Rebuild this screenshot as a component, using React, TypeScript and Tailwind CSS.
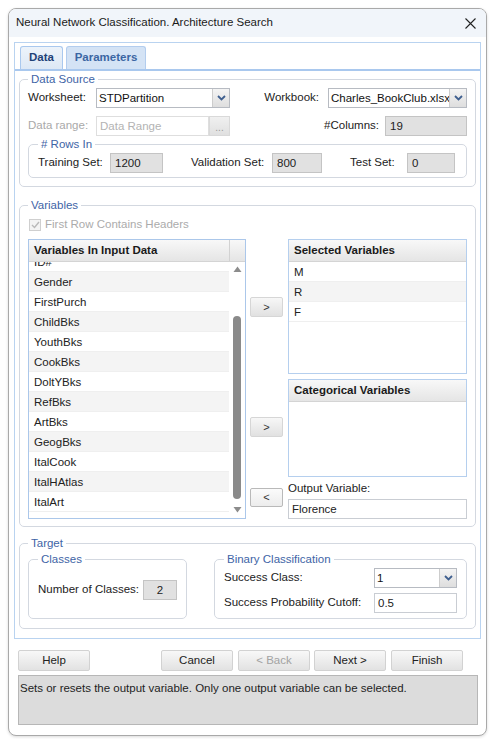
import React from "react";

const Chevron = () => (
  <svg width="9" height="6" viewBox="0 0 9 6">
    <path d="M1 1 L4.5 4.5 L8 1" fill="none" stroke="#3f5f8f" strokeWidth="1.8" />
  </svg>
);

function Select({ value, w }: { value: string; w: string }) {
  return (
    <div className={`flex h-[20px] border border-[#b7bbc2] bg-white ${w}`}>
      <div className="flex-1 pl-[2px] leading-[18px] text-[#111] whitespace-nowrap overflow-hidden">{value}</div>
      <div className="w-[17px] flex items-center justify-center border-l border-[#cdcdcd] bg-gradient-to-b from-[#f4f4f4] to-[#dedede]">
        <Chevron />
      </div>
    </div>
  );
}

function GrayBox({ value, w, center }: { value: string; w: string; center?: boolean }) {
  return (
    <div
      className={`h-[20px] border border-[#c4c4c4] bg-[#e1e1e1] leading-[18px] text-[#222] ${
        center ? "text-center" : "pl-[4px]"
      } ${w}`}
    >
      {value}
    </div>
  );
}

function Group({
  legend,
  className,
  children,
}: {
  legend: string;
  className: string;
  children?: React.ReactNode;
}) {
  return (
    <fieldset className={`border border-[#d3d8e0] rounded-[5px] min-w-0 ${className}`}>
      <legend className="px-[3px] h-[14px] leading-[14px] text-[#3e64a6]">{legend}</legend>
      {children}
    </fieldset>
  );
}

function Btn({ label, w, disabled }: { label: string; w: string; disabled?: boolean }) {
  return (
    <div
      className={`h-[21px] border border-[#d2d2d2] rounded-[2px] bg-gradient-to-b from-[#f8f8f8] to-[#e2e2e2] flex items-center justify-center ${
        disabled ? "text-[#a3a3a3]" : "text-[#222]"
      } ${w}`}
    >
      {label}
    </div>
  );
}

function SmallBtn({ label, h, light }: { label: string; h: string; light?: boolean }) {
  return (
    <div
      className={`w-[33px] ml-[4px] border rounded-[2px] flex items-center justify-center text-[11px] text-[#333] ${h} ${
        light
          ? "border-[#b9b9b9] bg-gradient-to-b from-[#fbfbfb] to-[#ececec]"
          : "border-[#d6d6d6] bg-gradient-to-b from-[#f7f7f7] to-[#e1e1e1]"
      }`}
    >
      {label}
    </div>
  );
}

const Tri = ({ up }: { up?: boolean }) => (
  <svg width="9" height="6" viewBox="0 0 9 6">
    <polygon points={up ? "0.5,6 4.5,0.5 8.5,6" : "0.5,0 4.5,5.5 8.5,0"} fill="#8c8c8c" />
  </svg>
);

const inputVars = [
  "ID#",
  "Gender",
  "FirstPurch",
  "ChildBks",
  "YouthBks",
  "CookBks",
  "DoltYBks",
  "RefBks",
  "ArtBks",
  "GeogBks",
  "ItalCook",
  "ItalHAtlas",
  "ItalArt",
];

const header = "h-[22px] border-b border-[#d4d4d4] bg-gradient-to-b from-[#f8f8f8] to-[#e5e5e5] font-bold leading-[21px] text-[#1a1a1a]";

export default function App() {
  return (
    <div className="w-[492px] h-[739px] bg-white pt-[8px] pl-[8px] font-['Liberation_Sans',Arial,sans-serif] text-[11.5px] text-[#222]">
      <div className="w-[479px] h-[728px] border border-[#a9a9a9] rounded-[8px] overflow-hidden bg-white flex flex-col shadow-[0_1px_3px_rgba(0,0,0,0.15)]">
        {/* Title bar */}
        <div className="h-[28px] shrink-0 bg-[#f1f5fa] flex items-center pl-[7px] pr-[9px]">
          <div className="flex-1 text-[11.5px] text-[#1b1b1b] whitespace-nowrap">
            Neural Network Classification. Architecture Search
          </div>
          <svg width="11" height="11" viewBox="0 0 11 11" className="mr-[1px]">
            <path d="M0.5 0.5 L10.5 10.5 M10.5 0.5 L0.5 10.5" stroke="#222" strokeWidth="1.1" />
          </svg>
        </div>

        {/* Tab panel */}
        <div className="mt-[5px] mx-[5px] h-[597px] shrink-0 border border-[#b9d3f0] flex flex-col">
          <div className="pt-[3px] pl-[5px] flex items-end gap-[3px] border-b-2 border-[#a9c8ee]">
            <div className="w-[43px] h-[23px] border border-b-0 border-[#a9c8ee] rounded-t-[3px] bg-gradient-to-b from-[#edf3fa] to-[#dde8f5] flex items-center justify-center font-bold text-[#1f4277]">
              Data
            </div>
            <div className="w-[80px] h-[23px] border border-b-0 border-[#b3cdee] rounded-t-[3px] bg-[#d4e3f5] flex items-center justify-center font-bold text-[#3b66a3]">
              Parameters
            </div>
          </div>

          {/* Data Source */}
          <Group legend="Data Source" className="mt-[1px] mx-[4px] h-[115px] pl-[8px] pr-[8px] pt-[1px]">
            <div className="flex items-center h-[20px] mt-[1px]">
              <div className="w-[68px]">Worksheet:</div>
              <Select value="STDPartition" w="w-[134px]" />
              <div className="flex-1 text-right pr-[9px]">Workbook:</div>
              <Select value="Charles_BookClub.xlsx" w="w-[139px]" />
            </div>
            <div className="flex items-center h-[20px] mt-[8px]">
              <div className="w-[68px] text-[#a9a9a9]">Data range:</div>
              <div className="w-[113px] h-[20px] border border-[#dedede] bg-white pl-[3px] leading-[18px] text-[#b3b3b3]">
                Data Range
              </div>
              <div className="w-[21px] h-[20px] border border-[#d9d9d9] bg-gradient-to-b from-[#f0f0f0] to-[#e0e0e0] text-[#9a9a9a] text-[10px] flex items-end justify-center leading-[14px]">
                ...
              </div>
              <div className="flex-1 text-right pr-[6px]">#Columns:</div>
              <GrayBox value="19" w="w-[82px]" />
            </div>
            <Group legend="# Rows In" className="mt-[1px] h-[41px] pl-[9px] pt-[1px]">
              <div className="flex items-center h-[20px] mt-[1px]">
                <div className="w-[72px]">Training Set:</div>
                <GrayBox value="1200" w="w-[53px]" />
                <div className="w-[81px] ml-[28px]">Validation Set:</div>
                <GrayBox value="800" w="w-[50px]" />
                <div className="w-[57px] ml-[28px]">Test Set:</div>
                <GrayBox value="0" w="w-[48px]" />
              </div>
            </Group>
          </Group>

          {/* Variables */}
          <Group legend="Variables" className="mt-[11px] mx-[4px] h-[329px] pl-[8px] pr-[8px]">
            <div className="flex items-center h-[13px] mt-[6px] ml-[1px]">
              <div className="w-[12px] h-[12px] border border-[#cfcfcf] bg-[#f3f3f3] flex items-center justify-center">
                <svg width="9" height="8" viewBox="0 0 9 8">
                  <path d="M1 4 L3.5 6.5 L8 1" fill="none" stroke="#b9b9b9" strokeWidth="1.4" />
                </svg>
              </div>
              <div className="ml-[4px] text-[#ababab]">First Row Contains Headers</div>
            </div>
            <div className="flex mt-[8px]">
              {/* Left list */}
              <div className="w-[218px] h-[280px] border border-[#abc7ea] bg-white flex flex-col">
                <div className={`flex ${header}`}>
                  <div className="w-[201px] border-r border-[#d2d2d2] pl-[5px]">Variables In Input Data</div>
                  <div className="flex-1" />
                </div>
                <div className="flex flex-1 min-h-0">
                  <div className="w-[200px] overflow-hidden">
                    <div className="-mt-[10px]">
                      {inputVars.map((v, i) => (
                        <div
                          key={v}
                          className={`h-[20px] leading-[20px] pl-[5px] border-b border-[#efefef] ${
                            i % 2 === 1 ? "bg-[#f4f4f4]" : "bg-white"
                          }`}
                        >
                          {v}
                        </div>
                      ))}
                    </div>
                  </div>
                  <div className="w-[16px] flex flex-col items-center">
                    <div className="mt-[4px] h-[6px] flex">
                      <Tri up />
                    </div>
                    <div className="mt-[44px] w-[8px] h-[183px] rounded-[4px] bg-[#8a8a8a]" />
                    <div className="mt-[8px] h-[6px] flex">
                      <Tri />
                    </div>
                  </div>
                </div>
              </div>

              {/* Buttons column */}
              <div className="w-[42px] flex flex-col">
                <div className="mt-[58px]">
                  <SmallBtn label=">" h="h-[20px]" />
                </div>
                <div className="mt-[100px]">
                  <SmallBtn label=">" h="h-[20px]" />
                </div>
                <div className="mt-[51px]">
                  <SmallBtn label="<" h="h-[19px]" light />
                </div>
              </div>

              {/* Right column */}
              <div className="w-[179px] flex flex-col">
                <div className="h-[135px] border border-[#b5cfee] bg-white flex flex-col">
                  <div className={`${header} pl-[5px]`}>Selected Variables</div>
                  {["M", "R", "F"].map((v, i) => (
                    <div
                      key={v}
                      className={`h-[20px] leading-[20px] pl-[5px] border-b border-[#efefef] ${
                        i % 2 === 1 ? "bg-[#f4f4f4]" : "bg-white"
                      }`}
                    >
                      {v}
                    </div>
                  ))}
                </div>
                <div className="mt-[5px] h-[98px] border border-[#b5cfee] bg-white">
                  <div className={`${header} pl-[5px]`}>Categorical Variables</div>
                </div>
                <div className="mt-[4px] h-[14px] leading-[14px]">Output Variable:</div>
                <div className="mt-[4px] h-[20px] border border-[#c9cdd3] bg-white pl-[3px] leading-[18px]">
                  Florence
                </div>
              </div>
            </div>
          </Group>

          {/* Target */}
          <Group legend="Target" className="mt-[9px] mx-[4px] h-[93px] pl-[8px] pr-[8px] pt-[2px]">
            <div className="flex">
              <Group legend="Classes" className="w-[159px] h-[67px] pl-[9px] pt-[14px]">
                <div className="flex items-center h-[20px]">
                  <div className="w-[105px] whitespace-nowrap">Number of Classes:</div>
                  <GrayBox value="2" w="w-[34px]" center />
                </div>
              </Group>
              <Group legend="Binary Classification" className="ml-auto w-[253px] h-[67px] pl-[9px] pt-[2px]">
                <div className="flex items-center h-[20px]">
                  <div className="w-[150px] whitespace-nowrap">Success Class:</div>
                  <Select value="1" w="w-[83px]" />
                </div>
                <div className="flex items-center h-[20px] mt-[5px]">
                  <div className="w-[150px] whitespace-nowrap">Success Probability Cutoff:</div>
                  <div className="w-[83px] h-[20px] border border-[#c9cdd3] bg-white pl-[3px] leading-[18px]">0.5</div>
                </div>
              </Group>
            </div>
          </Group>
        </div>

        {/* Bottom buttons */}
        <div className="mt-[11px] pl-[9px] flex items-center">
          <Btn label="Help" w="w-[72px]" />
          <div className="ml-[71px]">
            <Btn label="Cancel" w="w-[72px]" />
          </div>
          <div className="ml-[5px]">
            <Btn label="< Back" w="w-[72px]" disabled />
          </div>
          <div className="ml-[4px]">
            <Btn label="Next >" w="w-[72px]" />
          </div>
          <div className="ml-[5px]">
            <Btn label="Finish" w="w-[72px]" />
          </div>
        </div>

        {/* Status */}
        <div className="mt-[4px] ml-[9px] w-[460px] h-[50px] border border-[#b7b7b7] bg-[#dcdcdc] pl-[1px] pt-[4px] leading-[16px] text-[#1e1e1e]">
          Sets or resets the output variable. Only one output variable can be selected.
        </div>
      </div>
    </div>
  );
}
